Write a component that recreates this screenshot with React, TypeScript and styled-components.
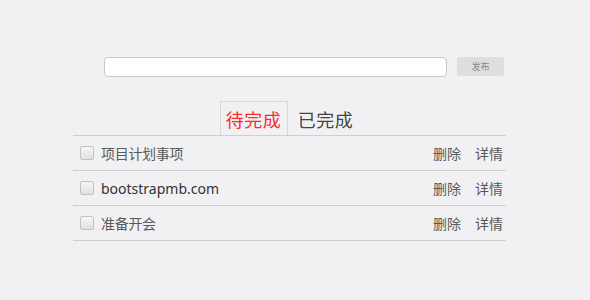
import React from "react";
import styled, { createGlobalStyle } from "styled-components";

const Global = createGlobalStyle`
  html, body { margin: 0; padding: 0; background: #f1f1f3; }
  body { font-family: "Noto Sans", "Noto Sans CJK SC", sans-serif; color: #555; }
`;

const Page = styled.div`
  width: 590px;
  height: 300px;
  box-sizing: border-box;
  padding: 57px 0 0 73px;
`;

const Wrap = styled.div`
  width: 433px;
`;

const Composer = styled.div`
  display: flex;
  align-items: flex-start;
  gap: 10px;
  padding-left: 31px;
`;

const TextInput = styled.input`
  width: 343px;
  height: 20px;
  box-sizing: border-box;
  border: 1px solid #c8c8c8;
  border-radius: 4px;
  background: #fff;
  outline: none;
  padding: 0 6px;
`;

const PublishButton = styled.button`
  width: 47px;
  height: 19px;
  border: none;
  border-radius: 3px;
  background: #dedede;
  color: #888;
  font-family: "Noto Sans CJK SC", sans-serif;
  font-size: 9px;
  padding: 0;
  line-height: 19px;
`;

const Tabs = styled.div`
  display: flex;
  justify-content: center;
  gap: 4px;
  margin-top: 24px;
  border-bottom: 1px solid #cfcfcf;
`;

const Tab = styled.div<{ $active?: boolean }>`
  width: 68px;
  height: 34px;
  box-sizing: border-box;
  display: flex;
  align-items: center;
  justify-content: center;
  font-family: "Noto Sans CJK SC", sans-serif;
  font-size: 18px;
  letter-spacing: 0.5px;
  color: ${(p) => (p.$active ? "#ff2a2a" : "#444")};
  border: 1px solid ${(p) => (p.$active ? "#d8d8d8" : "transparent")};
  border-bottom: none;
`;

const Row = styled.div`
  display: flex;
  align-items: center;
  height: 35px;
  box-sizing: border-box;
  border-bottom: 1px solid #cfcfcf;
  padding: 0 3px 0 7px;
  font-size: 14px;
`;

const Check = styled.span`
  width: 14px;
  height: 14px;
  box-sizing: border-box;
  border: 1px solid #c2c2c2;
  border-radius: 2px;
  background: linear-gradient(#f6f6f6, #e0e0e0);
  margin-right: 7px;
`;

const Label = styled.span<{ $latin?: boolean }>`
  flex: 1;
  font-family: ${(p) => (p.$latin ? '"Noto Sans", sans-serif' : '"Noto Sans CJK SC", sans-serif')};
  color: ${(p) => (p.$latin ? "#333" : "#595959")};
  letter-spacing: ${(p) => (p.$latin ? "0" : "-0.3px")};
`;

const Action = styled.span`
  font-family: "Noto Sans CJK SC", sans-serif;
  color: #595959;
  margin-left: 14px;
`;

const items = [
  { text: "项目计划事项", latin: false },
  { text: "bootstrapmb.com", latin: true },
  { text: "准备开会", latin: false },
];

export default function App() {
  return (
    <Page>
      <Global />
      <Wrap>
        <Composer>
          <TextInput />
          <PublishButton>发布</PublishButton>
        </Composer>
        <Tabs>
          <Tab $active>待完成</Tab>
          <Tab>已完成</Tab>
        </Tabs>
        {items.map((it) => (
          <Row key={it.text}>
            <Check />
            <Label $latin={it.latin}>{it.text}</Label>
            <Action>删除</Action>
            <Action>详情</Action>
          </Row>
        ))}
      </Wrap>
    </Page>
  );
}
